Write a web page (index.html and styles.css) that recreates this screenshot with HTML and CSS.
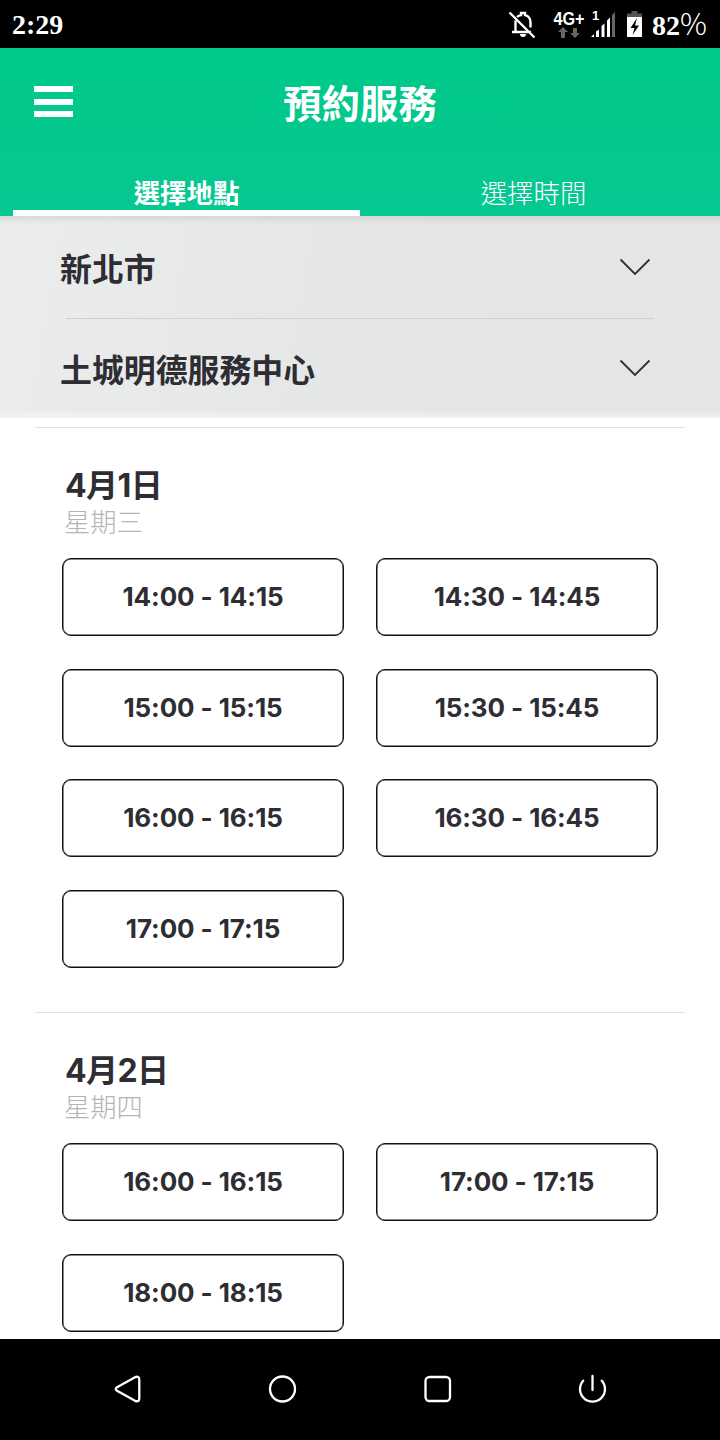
FILE: index.html
```html
<!DOCTYPE html>
<html lang="zh-Hant">
<head>
    <meta charset="UTF-8">
    <meta name="viewport" content="width=device-width, initial-scale=1.0">
    <title>預約服務</title>
    <link rel="stylesheet" href="styles.css">
</head>
<body>
    <div class="status-bar">
        <span class="clock">2:29</span>
        <svg class="status-icons" width="158" height="48" viewBox="0 0 158 48">
            <!-- muted bell -->
            <g fill="none" stroke="#fff" stroke-width="2.4">
                <path d="M17 17c1-1 2.500-1.800 4-1.900V13h4v2.100c3.500.8 5.500 3.500 5.500 7.400v5"/>
                <path d="M15.500 20.500v10.500M12 32h19M9.500 12.500l25 25"/>
            </g>
            <path d="M20 34h6a3 3 0 0 1-6 0z" fill="#fff"/>
            <text class="network" x="53.500" y="24.500" textLength="31" lengthAdjust="spacingAndGlyphs">4G+</text>
            <g fill="#666">
                <path d="M63 27l5 5h-3v6h-4v-6h-3z"/>
                <path d="M75 38l-5-5h3v-5h4v5h3z"/>
            </g>
            <!-- signal -->
            <text class="sim" x="92" y="20">1</text>
            <g fill="#fff">
                <path d="M91 37l3-3v3zM96 31.500l3-2v7.500h-3zM101.500 26l3-2.500v13.500h-3zM107 20.500l3-3v19.500h-3z"/>
                <path d="M112 15l3-3v25h-3z" fill="#666"/>
            </g>
            <!-- battery -->
            <path d="M127 13.500h4.500v-2.500h6v2.500h4.500v4h-15z" fill="#555"/>
            <path d="M127 17h15v20h-15z" fill="#fff"/>
            <path d="M137 18l-6.500 10h4l-2 7 6.500-9.500h-4z" fill="#000"/>
        </svg>
        <span class="battery">82<span class="percent">%</span></span>
    </div>

    <header class="header">
        <div class="title-bar">
            <div class="menu">
                <span></span>
                <span></span>
                <span></span>
            </div>
            <h1>預約服務</h1>
        </div>
        <nav class="tabs">
            <div class="tab active">選擇地點</div>
            <div class="tab">選擇時間</div>
        </nav>
    </header>

    <div class="location">
        <div class="select">
            <span>新北市</span>
            <svg width="32" height="18" viewBox="0 0 32 18"><path d="M1.500 1.500L16 16 30.500 1.500"/></svg>
        </div>
        <div class="select">
            <span>土城明德服務中心</span>
            <svg width="32" height="18" viewBox="0 0 32 18"><path d="M1.500 1.500L16 16 30.500 1.500"/></svg>
        </div>
    </div>

    <main class="schedule">
        <section class="day">
            <h2>4月1日</h2>
            <p>星期三</p>
            <div class="slots">
                <button type="button">14:00 - 14:15</button>
                <button type="button">14:30 - 14:45</button>
                <button type="button">15:00 - 15:15</button>
                <button type="button">15:30 - 15:45</button>
                <button type="button">16:00 - 16:15</button>
                <button type="button">16:30 - 16:45</button>
                <button type="button">17:00 - 17:15</button>
            </div>
        </section>
        <section class="day">
            <h2>4月2日</h2>
            <p>星期四</p>
            <div class="slots">
                <button type="button">16:00 - 16:15</button>
                <button type="button">17:00 - 17:15</button>
                <button type="button">18:00 - 18:15</button>
            </div>
        </section>
    </main>

    <footer class="nav-bar">
        <svg width="32" height="32" viewBox="0 0 32 32"><path d="M5 14.300L23 4.200q4.300-1.600 4.300 2.500v18.600q0 4.100-4.300 2.500L5 17.700q-2.500-1.700 0-3.400z"/></svg>
        <svg width="32" height="32" viewBox="0 0 32 32"><circle cx="15.500" cy="16" r="12.500"/></svg>
        <svg width="32" height="32" viewBox="0 0 32 32"><rect x="4.500" y="4" width="24.500" height="24" rx="4"/></svg>
        <svg width="32" height="32" viewBox="0 0 32 32"><path d="M16.500 3v14M7.200 7.700a12.500 12.500 0 1 0 18.600 0"/></svg>
    </footer>
</body>
</html>
```

FILE: styles.css
```css
* {
    box-sizing: border-box;
}
body {
    display: flex;
    flex-direction: column;
    height: 1440px;
    margin: 0;
    overflow: hidden;
    background-color: #fff;
    color: #2e2d33;
    font-family: Inter, "Noto Sans CJK TC", sans-serif;
}
h1, h2, p {
    margin: 0;
}
.status-bar {
    display: flex;
    flex: none;
    align-items: center;
    height: 48px;
    padding: 0 12px;
    background-color: #000;
    color: #fff;
    font-family: "Liberation Serif", serif;
    font-size: 28px;
    font-weight: bold;
}
.clock {
    flex: 1;
    padding-top: 2px;
}
.status-icons {
    flex: none;
    margin-right: -6px;
}
.network {
    fill: #fff;
    font: bold 18px "Liberation Sans", sans-serif;
}
.sim {
    fill: #fff;
    font: bold 13px "Liberation Sans", sans-serif;
}
.battery {
    width: 56px;
    padding-top: 1px;
    white-space: nowrap;
}
.percent {
    font-family: "Noto Sans CJK TC", sans-serif;
    font-weight: 300;
    font-size: 30px;
    line-height: 1;
}
.header {
    flex: none;
    height: 168px;
    background: linear-gradient(#00c988, #06c893);
    color: #fff;
    font-family: "Noto Sans CJK TC", sans-serif;
}
.title-bar {
    display: grid;
    grid-template-columns: 1fr auto 1fr;
    align-items: center;
    height: 107px;
    padding: 0 34px;
}
.title-bar h1 {
    padding-bottom: 2px;
    font-size: 38.4px;
    line-height: 50px;
}
.menu {
    display: flex;
    flex-direction: column;
    gap: 6.700px;
    width: 39px;
}
.menu span {
    height: 6px;
    background-color: #fff;
}
.tabs {
    display: flex;
    padding: 0 13px;
}
.tab {
    flex: 1;
    height: 61px;
    padding-top: 20px;
    font-size: 26.4px;
    font-weight: 300;
    line-height: 34px;
    text-align: center;
}
.tab.active {
    border-bottom: 6px solid #fff;
    font-weight: bold;
}
.location {
    flex: none;
    height: 202px;
    padding: 0 66px;
    background:
        linear-gradient(rgba(0, 0, 0, 0.08), transparent 8px),
        linear-gradient(to top, rgba(255, 255, 255, 0.45), transparent 8px),
        linear-gradient(100deg, #ebedec, #e5e7e6 50%, #e4e6e5);
    font-family: "Noto Sans CJK TC", sans-serif;
}
.select {
    display: flex;
    align-items: center;
    justify-content: space-between;
    height: 98px;
    padding-right: 3px;
    font-size: 31.900px;
    font-weight: bold;
}
.select:first-child {
    height: 103px;
    border-bottom: 1px solid #cfd1d1;
}
.select span {
    margin-left: -6px;
}
.select svg {
    fill: none;
    stroke: #303035;
    stroke-width: 1.800;
}
.schedule {
    flex: 1;
    min-height: 0;
    padding: 9px 35px 0;
    overflow: hidden;
}
.day {
    height: 585px;
    padding: 38px 27px 0;
    border-top: 1px solid #e3e5e5;
}
.day h2 {
    padding-left: 3px;
    font-size: 32px;
    letter-spacing: -0.600px;
    line-height: 40px;
}
.day p {
    padding-left: 2px;
    color: #b2b5b8;
    font-size: 26.300px;
    font-weight: 200;
    line-height: 34px;
}
.slots {
    display: grid;
    grid-template-columns: 282px 282px;
    grid-auto-rows: 78px;
    gap: 32.500px 32px;
    margin-top: 18px;
}
.slots button {
    padding: 0 0 1px;
    border: 1px solid #111;
    border-radius: 9px;
    background-color: #fff;
    box-shadow: inset 0 0 0 0.500px #111;
    color: #2e2d33;
    font-family: Inter, sans-serif;
    font-size: 26px;
    font-weight: bold;
    font-feature-settings: "calt" 0; /* keep the colon and dash on the baseline */
    letter-spacing: -0.100px;
}
.nav-bar {
    display: flex;
    flex: none;
    align-items: center;
    justify-content: space-between;
    height: 101px;
    padding: 0 112px 1px;
    background-color: #000;
}
.nav-bar svg {
    fill: none;
    stroke: #fff;
    stroke-width: 2.300;
    stroke-linecap: round;
}
```
